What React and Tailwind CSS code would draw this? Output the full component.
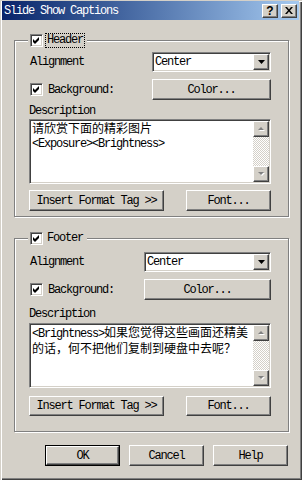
import React from 'react';

const MONO = "[font-family:'Liberation_Mono',monospace] text-[12px] tracking-[-1.2px] text-black";
const CJK = "[font-family:'Noto_Sans_CJK_SC',sans-serif] text-[12px] tracking-normal leading-[14px]";

const RAISED = 'border border-t-white border-l-white border-r-[#404040] border-b-[#404040] shadow-[inset_-1px_-1px_0_#808080] bg-[#d4d0c8]';
const SUNKEN = 'border border-t-[#808080] border-l-[#808080] border-r-white border-b-white shadow-[inset_1px_1px_0_#404040,inset_-1px_-1px_0_#d4d0c8]';

const Checkbox = () => (
  <div className={`flex h-[13px] w-[13px] shrink-0 items-center justify-center bg-white ${SUNKEN}`}>
    <svg width="7" height="7" viewBox="0 0 7 7">
      <path d="M0 2 L2 4 L6 0 L6 3 L2 7 L0 5 Z" fill="#000" />
    </svg>
  </div>
);

const Button = ({ label, className = '', isDefault }) => {
  const inner = (
    <div className={`flex h-full w-full items-center justify-center ${RAISED}`}>
      <span className={MONO}>{label}</span>
    </div>
  );
  if (isDefault) {
    return <div className={`border border-black ${className}`}>{inner}</div>;
  }
  return <div className={className}>{inner}</div>;
};

const Arrow = ({ up }) => (
  <svg width="9" height="6" viewBox="0 0 9 6">
    {up ? (
      <>
        <path d="M2 5 L8 5 L5 2 Z" fill="#fff" />
        <path d="M1 4 L7 4 L4 1 Z" fill="#808080" />
      </>
    ) : (
      <>
        <path d="M2 2 L8 2 L5 5 Z" fill="#fff" />
        <path d="M1 1 L7 1 L4 4 Z" fill="#808080" />
      </>
    )}
  </svg>
);

const Scrollbar = () => (
  <div className="flex h-full w-[16px] shrink-0 flex-col">
    <div className={`flex h-[16px] items-center justify-center ${RAISED}`}>
      <Arrow up />
    </div>
    <div className="flex-1 bg-[image:repeating-conic-gradient(#ffffff_0_25%,#d4d0c8_0_50%)] bg-[length:2px_2px]" />
    <div className={`flex h-[16px] items-center justify-center ${RAISED}`}>
      <Arrow />
    </div>
  </div>
);

const Combo = ({ className }) => (
  <div className={`flex h-[20px] items-center bg-white ${SUNKEN} ${className}`}>
    <span className={`${MONO} flex-1 pl-[2px]`}>Center</span>
    <div className={`mr-[1px] flex h-[16px] w-[16px] items-center justify-center ${RAISED}`}>
      <svg width="7" height="4" viewBox="0 0 7 4">
        <path d="M0 0 L7 0 L3.5 4 Z" fill="#000" />
      </svg>
    </div>
  </div>
);

const Group = ({ legend, focus, top, rowGap, labelGap, areaGap, btnGap, bottom, btnH, comboW, textLines }) => (
  <div className={`relative ml-[14px] w-[275px] border border-[#808080] shadow-[inset_1px_1px_0_#fff,1px_1px_0_#fff] ${top}`}>
    <div className="absolute left-[13px] top-[-7px] flex items-center gap-[3px] bg-[#d4d0c8] pl-[2px] pr-[3px]">
      <Checkbox />
      <span className={`${MONO} leading-[13px] px-[1px] ${focus ? 'outline outline-1 outline-dotted outline-black' : ''}`}>{legend}</span>
    </div>
    <div className={`ml-[14px] flex w-[242px] flex-col ${bottom}`}>
      <div className="flex h-[20px] items-center">
        <span className={`${MONO} pl-[1px]`}>Alignment</span>
        <Combo className={`ml-auto ${comboW}`} />
      </div>
      <div className={`flex h-[21px] items-center ${rowGap}`}>
        <div className="ml-[1px]"><Checkbox /></div>
        <span className={`${MONO} ml-[5px]`}>Background:</span>
        <Button label="Color..." className={`ml-auto h-[21px] ${comboW}`} />
      </div>
      <span className={`${MONO} h-[12px] leading-[12px] ${labelGap}`}>Description</span>
      <div className={`flex h-[65px] bg-white ${SUNKEN} ${areaGap}`}>
        <div className="flex-1 whitespace-nowrap pl-[2px] pt-[1px] text-[12px] leading-[14px]">{textLines}</div>
        <div className="py-[1px] pr-[1px]"><Scrollbar /></div>
      </div>
      <div className={`flex ${btnH} ${btnGap}`}>
        <Button label="Insert Format Tag >>" className="h-full w-[135px]" />
        <Button label="Font..." className="ml-auto h-full w-[85px]" />
      </div>
    </div>
  </div>
);

export default function App() {
  return (
    <div className="h-[480px] w-[302px] overflow-hidden bg-[#d4d0c8] shadow-[inset_1px_1px_0_#d4d0c8,inset_2px_2px_0_#fff,inset_-1px_-1px_0_#404040,inset_-2px_-2px_0_#808080]">
      {/* title bar */}
      <div className="ml-[2px] mt-[1px] flex h-[19px] w-[297px] items-center bg-gradient-to-r from-[#0a246a] to-[#a6caf0] pl-[2px] pr-[2px]">
        <span className="[font-family:'Liberation_Mono',monospace] text-[12px] tracking-[-1.2px] text-white">Slide Show Captions</span>
        <div className="ml-auto flex gap-[3px]">
          <div className={`flex h-[14px] w-[16px] items-center justify-center ${RAISED}`}>
            <span className="[font-family:'Liberation_Sans',sans-serif] text-[12px] font-bold leading-[12px] text-black">?</span>
          </div>
          <div className={`flex h-[14px] w-[16px] items-center justify-center ${RAISED}`}>
            <svg width="8" height="7" viewBox="0 0 8 7">
              <path d="M0 0 L2 0 L4 2.5 L6 0 L8 0 L5 3.5 L8 7 L6 7 L4 4.5 L2 7 L0 7 L3 3.5 Z" fill="#000" />
            </svg>
          </div>
        </div>
      </div>

      <Group
        legend="Header"
        focus
        top="mt-[20px] h-[177px]"
        rowGap="mt-[7px]"
        labelGap="mt-[5px]"
        areaGap="mt-[2px]"
        btnGap="mt-[6px]"
        btnH="h-[21px]"
        bottom="mt-[11px]"
        comboW="w-[119px]"
        textLines={
          <>
            <span className={CJK}>请欣赏下面的精彩图片</span>
            <br />
            <span className={MONO}>&lt;Exposure&gt;&lt;Brightness&gt;</span>
          </>
        }
      />

      <Group
        legend="Footer"
        top="mt-[21px] h-[194px]"
        rowGap="mt-[7px]"
        labelGap="mt-[8px]"
        areaGap="mt-[3px]"
        btnGap="mt-[8px]"
        btnH="h-[20px]"
        bottom="mt-[13px]"
        comboW="w-[127px]"
        textLines={
          <>
            <span className={MONO}>&lt;Brightness&gt;</span>
            <span className={CJK}>如果您觉得这些画面还精美</span>
            <br />
            <span className={CJK}>的话，何不把他们复制到硬盘中去呢？</span>
          </>
        }
      />

      <div className="ml-[45px] mt-[13px] flex h-[21px] gap-[9px]">
        <Button label="OK" isDefault className="h-full w-[75px]" />
        <Button label="Cancel" className="h-full w-[75px]" />
        <Button label="Help" className="h-full w-[75px]" />
      </div>
    </div>
  );
}
